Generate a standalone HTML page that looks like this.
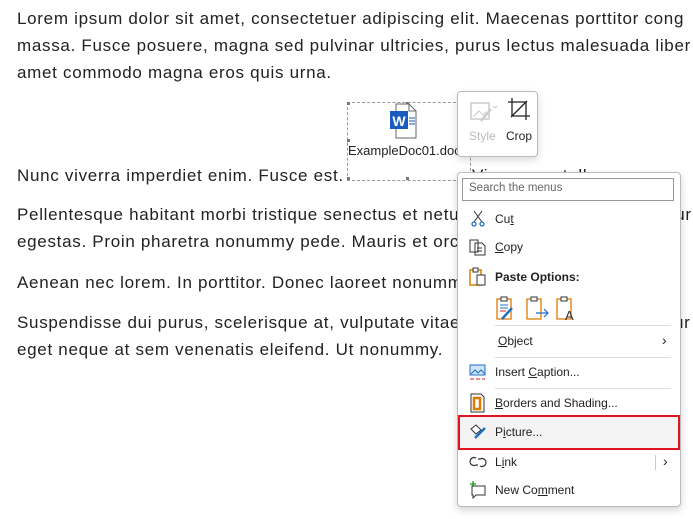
<!DOCTYPE html><html><head><style>
body{margin:0;width:693px;height:519px;overflow:hidden;background:#fff;font-family:"Liberation Sans",sans-serif;position:relative}
.t{position:absolute;left:17px;font-size:17px;letter-spacing:0.7px;color:#222;white-space:nowrap;line-height:27px}
.m{position:absolute;font-size:12px;color:#222;white-space:nowrap}
.sep{position:absolute;left:495px;width:176px;height:1px;background:#ddd}
</style></head><body>
<div class="t" style="top:5px">Lorem ipsum dolor sit amet, consectetuer adipiscing elit. Maecenas porttitor cong<br>massa. Fusce posuere, magna sed pulvinar ultricies, purus lectus malesuada liber<br>amet commodo magna eros quis urna.</div>
<div class="t" style="top:162px">Nunc viverra imperdiet enim. Fusce est.</div>
<div class="t" style="top:162px;left:472px">Vivamus a tellus.</div>
<div class="t" style="top:201px">Pellentesque habitant morbi tristique senectus et netus et malesuada fames ac tur<br>egestas. Proin pharetra nonummy pede. Mauris et orci.</div>
<div class="t" style="top:269px">Aenean nec lorem. In porttitor. Donec laoreet nonummy augue.</div>
<div class="t" style="top:309px">Suspendisse dui purus, scelerisque at, vulputate vitae, pretium mattis, nunc. Maur<br>eget neque at sem venenatis eleifend. Ut nonummy.</div>
<!-- object -->
<div style="position:absolute;left:347px;top:102px;width:122px;height:77px;border:1px dashed #999;background:#fff"></div>
<div style="position:absolute;left:347px;top:102px;width:3px;height:3px;background:#777"></div>
<div style="position:absolute;left:406px;top:102px;width:3px;height:3px;background:#777"></div>
<div style="position:absolute;left:347px;top:139px;width:3px;height:3px;background:#777"></div>
<div style="position:absolute;left:347px;top:177px;width:3px;height:3px;background:#777"></div>
<div style="position:absolute;left:406px;top:177px;width:3px;height:3px;background:#777"></div>
<svg style="position:absolute;left:389px;top:103px" width="34" height="36"><path d="M7 1h13l7 7v27H7z" fill="#fff" stroke="#666"/><path d="M20 1v7h7" fill="none" stroke="#666"/><rect x="1" y="8" width="18" height="18" fill="#185abd"/><text x="10" y="23" font-size="14" font-weight="bold" fill="#fff" text-anchor="middle" font-family="Liberation Sans">W</text><path d="M20 15h6M20 18h6M20 21h6" stroke="#185abd"/></svg>
<div class="m" style="left:348px;top:143px;font-size:13px;width:120px;overflow:hidden">ExampleDoc01.docx</div>
<!-- toolbar -->
<div style="position:absolute;left:457px;top:91px;width:79px;height:64px;border:1px solid #bbb;border-radius:4px;background:#fff;box-shadow:0 3px 8px rgba(0,0,0,.15)"></div>
<svg style="position:absolute;left:469px;top:99px" width="30" height="26"><rect x="2" y="4" width="18" height="16" fill="none" stroke="#ccc" stroke-width="1.5"/><path d="M4 18l6-6 4 4 3-3" stroke="#ccc" fill="none"/><path d="M12 22l10-12" stroke="#ccc" stroke-width="2.5"/><path d="M24 7l2 2 2-2" stroke="#ccc" fill="none"/></svg>
<svg style="position:absolute;left:507px;top:97px" width="26" height="26"><path d="M5 1v18h18M1 5h18v18M4 20L20 4" stroke="#222" fill="none" stroke-width="1.3"/></svg>
<div class="m" style="left:469px;top:129px;color:#bbb">Style</div>
<div class="m" style="left:506px;top:129px">Crop</div>
<!-- menu -->
<div style="position:absolute;left:457px;top:172px;width:222px;height:333px;border:1px solid #bbb;border-radius:4px;background:#fff;box-shadow:0 3px 8px rgba(0,0,0,.18)"></div>
<div style="position:absolute;left:462px;top:178px;width:210px;height:21px;border:1px solid #999"></div>
<div class="m" style="left:469px;top:182px;color:#666;font-size:11.5px">Search the menus</div>
<svg style="position:absolute;left:470px;top:210px" width="16" height="18"><path d="M4 1l8 11M12 1L4 12" stroke="#333"/><circle cx="4" cy="14" r="2" fill="none" stroke="#1e6fc6" stroke-width="1.3"/><circle cx="12" cy="14" r="2" fill="none" stroke="#1e6fc6" stroke-width="1.3"/></svg>
<div class="m" style="left:495px;top:212px">Cu<u>t</u></div>
<svg style="position:absolute;left:469px;top:238px" width="18" height="18"><path d="M1 2h8v12H1z M6 5h7l3 3v9H6z" fill="#fff" stroke="#333"/><path d="M8 10h5M8 13h5" stroke="#333"/></svg>
<div class="m" style="left:495px;top:240px"><u>C</u>opy</div>
<svg style="position:absolute;left:469px;top:267px" width="18" height="20"><path d="M1 3h11v15H1z" fill="#fff" stroke="#e07b00" stroke-width="1.5"/><path d="M4 1h5v4H4z" fill="#fff" stroke="#333"/><path d="M8 8h8v10H8z" fill="#fff" stroke="#333"/></svg>
<div class="m" style="left:495px;top:270px;font-weight:bold">Paste Options:</div>
<svg style="position:absolute;left:494px;top:295px" width="90" height="26"><g fill="#fff" stroke="#e07b00" stroke-width="1.3"><path d="M3 4h14v20H3z"/><path d="M33 4h14v20H33z"/><path d="M63 4h14v20H63z"/></g><g fill="#fff" stroke="#333"><path d="M7 2h6v4H7z M37 2h6v4h-6z M67 2h6v4h-6z"/></g><path d="M6 10h8M6 13h8" stroke="#1e6fc6"/><path d="M6 16h6" stroke="#d22"/><path d="M8 24l10-11" stroke="#1e6fc6" stroke-width="2.5"/><path d="M42 18h12M50 14l4 4-4 4" stroke="#1e6fc6" fill="none" stroke-width="1.2"/><text x="71" y="25" font-size="13" fill="#333" font-family="Liberation Sans">A</text></svg>
<div class="sep" style="top:325px"></div>
<div class="m" style="left:498px;top:334px"><u>O</u>bject</div>
<div class="m" style="left:662px;top:332px;font-size:14px">›</div>
<div class="sep" style="top:357px"></div>
<svg style="position:absolute;left:469px;top:363px" width="18" height="18"><rect x="1" y="2" width="15" height="10" fill="#cfe3f7" stroke="#1e6fc6"/><path d="M2 11l4-4 3 3 3-3 4 4" stroke="#1e6fc6" fill="none"/><path d="M1 16h4M7 16h4M13 16h3" stroke="#d22"/></svg>
<div class="m" style="left:495px;top:365px">Insert <u>C</u>aption...</div>
<div class="sep" style="top:388px"></div>
<svg style="position:absolute;left:470px;top:393px" width="16" height="20"><path d="M1 1h10l3 3v15H1z" fill="#fff" stroke="#333"/><rect x="4" y="5" width="6" height="11" fill="none" stroke="#e07b00" stroke-width="2.5"/></svg>
<div class="m" style="left:495px;top:396px"><u>B</u>orders and Shading...</div>
<div style="position:absolute;left:458px;top:415px;width:218px;height:31px;background:#f3f3f3;border:2px solid #e0141e"></div>
<svg style="position:absolute;left:469px;top:423px" width="18" height="18"><path d="M2 6l5-4 5 5-5 4z" fill="#fff" stroke="#333"/><path d="M6 15l10-10" stroke="#1e6fc6" stroke-width="2.5"/></svg>
<div class="m" style="left:495px;top:425px">P<u>i</u>cture...</div>
<svg style="position:absolute;left:469px;top:455px" width="18" height="14"><path d="M7 3a4 4 0 1 0 0 7h2M9 4h2a4 4 0 1 1 0 7" fill="none" stroke="#333" stroke-width="1.2"/></svg>
<div class="m" style="left:495px;top:455px">L<u>i</u>nk</div>
<div style="position:absolute;left:655px;top:455px;width:1px;height:15px;background:#ccc"></div>
<div class="m" style="left:663px;top:453px;font-size:14px">›</div>
<svg style="position:absolute;left:469px;top:481px" width="18" height="18"><path d="M3 5h13v9H7l-3 3v-3H3z" fill="none" stroke="#333"/><path d="M4 0v6M1 3h6" stroke="#1a9b1a" stroke-width="1.3"/></svg>
<div class="m" style="left:495px;top:483px">New Co<u>m</u>ment</div>
</body></html>
